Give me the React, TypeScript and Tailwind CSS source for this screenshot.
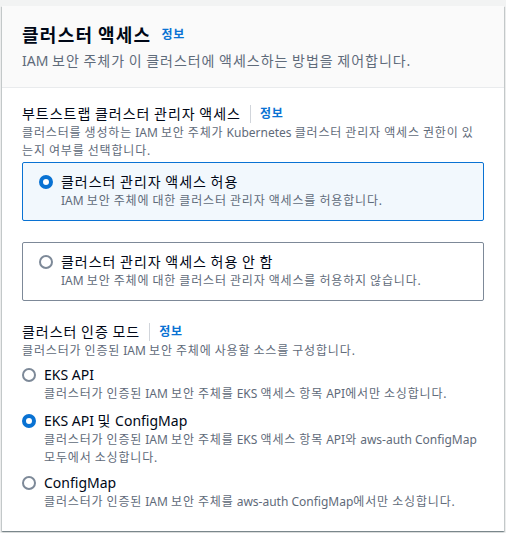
import React from 'react'

const font = { fontFamily: '"Noto Sans", "Noto Sans CJK KR", sans-serif' }

// Hangul glyphs in the installed CJK font are a bit narrow, widen them
function K({ children }: { children: string }) {
  const parts = children.split(/([가-힣]+)/)
  return (
    <>
      {parts.map((p, i) =>
        /[가-힣]/.test(p) ? (
          <span key={i} className='tracking-[0.07em]'>
            {p}
          </span>
        ) : (
          <React.Fragment key={i}>{p}</React.Fragment>
        )
      )}
    </>
  )
}

function Radio({ checked }: { checked: boolean }) {
  return checked ? (
    <span className='flex h-[14px] w-[14px] shrink-0 rounded-full border-[4px] border-[#0972d3] bg-white' />
  ) : (
    <span className='flex h-[14px] w-[14px] shrink-0 rounded-full border-2 border-[#7d8998] bg-white' />
  )
}

function InfoLink({ sep }: { sep?: boolean }) {
  return (
    <span
      className={
        sep
          ? 'ml-[9px] border-l border-[#d1d5db] pl-[9px] text-[12px] font-bold leading-[18px] text-[#0972d3]'
          : 'ml-[10px] text-[12px] font-bold leading-[18px] text-[#0972d3]'
      }
    >
      <K>정보</K>
    </span>
  )
}

function Tile({ checked, label, desc }: { checked: boolean; label: string; desc: string }) {
  return (
    <div
      className={
        checked
          ? 'flex rounded-[2px] border border-[#0972d3] bg-[#f2f8fd] pl-4 pr-4 pt-[9px] pb-[10px]'
          : 'flex rounded-[2px] border border-[#7d8998] bg-white pl-4 pr-4 pt-[9px] pb-[10px]'
      }
    >
      <div className='flex h-[20px] items-center'>
        <Radio checked={checked} />
      </div>
      <div className='ml-2 flex flex-col'>
        <span className='text-[14px] leading-[20px] text-[#000716]'><K>{label}</K></span>
        <span className='text-[12px] leading-[18px] text-[#5f6b7a]'><K>{desc}</K></span>
      </div>
    </div>
  )
}

function Option({ checked, label, desc }: { checked: boolean; label: string; desc: string }) {
  return (
    <div className='flex'>
      <div className='flex h-[20px] items-center'>
        <Radio checked={checked} />
      </div>
      <div className='ml-2 flex flex-col'>
        <span className='text-[14px] leading-[20px] text-[#000716]'><K>{label}</K></span>
        <span className='text-[12px] leading-[18px] text-[#5f6b7a]'><K>{desc}</K></span>
      </div>
    </div>
  )
}

export default function App() {
  return (
    <div style={font} className='h-[533px] w-[506px] overflow-hidden bg-[#f2f3f3] pt-[6px]'>
      <div className='ml-[2px] w-[502px] bg-white shadow-[0_1px_1px_0_rgba(0,28,36,0.3),1px_1px_1px_0_rgba(0,28,36,0.15),-1px_1px_1px_0_rgba(0,28,36,0.15)]'>
        {/* header */}
        <div className='border-b border-[#e9ebed] bg-[#fafafa] px-5 pt-[18px] pb-[16px]'>
          <div className='flex items-center'>
            <h2 className='text-[18px] font-bold leading-[22px] text-[#000716]'><K>클러스터 액세스</K></h2>
            <InfoLink />
          </div>
          <p className='mt-[5px] text-[14px] leading-[20px] text-[#5f6b7a]'>
            <K>IAM 보안 주체가 이 클러스터에 액세스하는 방법을 제어합니다.</K>
          </p>
        </div>

        {/* body */}
        <div className='px-5 pt-4 pb-[20px]'>
          <div className='flex items-center'>
            <span className='text-[14px] leading-[20px] text-[#000716]'><K>부트스트랩 클러스터 관리자 액세스</K></span>
            <InfoLink sep />
          </div>
          <p className='text-[12px] leading-[18px] text-[#5f6b7a]'>
            <K>클러스터를 생성하는 IAM 보안 주체가 Kubernetes 클러스터 관리자 액세스 권한이 있</K>
            <K>는지 여부를 선택합니다.</K>
          </p>

          <div className='mt-[2px] flex flex-col gap-[21px]'>
            <Tile
              checked
              label='클러스터 관리자 액세스 허용'
              desc='IAM 보안 주체에 대한 클러스터 관리자 액세스를 허용합니다.'
            />
            <Tile
              checked={false}
              label='클러스터 관리자 액세스 허용 안 함'
              desc='IAM 보안 주체에 대한 클러스터 관리자 액세스를 허용하지 않습니다.'
            />
          </div>

          <div className='mt-[21px] flex items-center'>
            <span className='text-[14px] leading-[20px] text-[#000716]'><K>클러스터 인증 모드</K></span>
            <InfoLink sep />
          </div>
          <p className='text-[12px] leading-[18px] text-[#5f6b7a]'>
            <K>클러스터가 인증된 IAM 보안 주체에 사용할 소스를 구성합니다.</K>
          </p>

          <div className='mt-[5px] flex flex-col'>
            <Option
              checked={false}
              label='EKS API'
              desc='클러스터가 인증된 IAM 보안 주체를 EKS 액세스 항목 API에서만 소싱합니다.'
            />
            <div className='mt-[8px]'>
              <Option
                checked
                label='EKS API 및 ConfigMap'
                desc='클러스터가 인증된 IAM 보안 주체를 EKS 액세스 항목 API와 aws-auth ConfigMap 모두에서 소싱합니다.'
              />
            </div>
            <div className='mt-[6px]'>
              <Option
                checked={false}
                label='ConfigMap'
                desc='클러스터가 인증된 IAM 보안 주체를 aws-auth ConfigMap에서만 소싱합니다.'
              />
            </div>
          </div>
        </div>
      </div>
    </div>
  )
}
